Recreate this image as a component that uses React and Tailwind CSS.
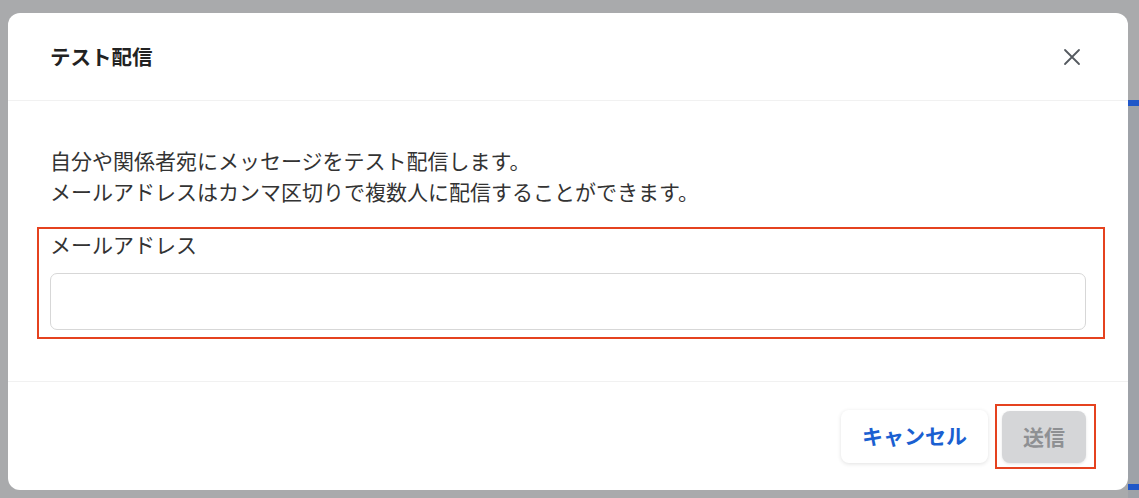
const FONT = { fontFamily: '"Noto Sans CJK JP", "Noto Sans", sans-serif' };

function CloseIcon() {
  return (
    <svg width="18" height="18" viewBox="0 0 18 18" fill="none" aria-hidden="true">
      <path d="M2 2L16 16M16 2L2 16" stroke="#555a60" strokeWidth="1.8" strokeLinecap="round" />
    </svg>
  );
}

export default function App() {
  return (
    <div className="flex h-[498px] w-[1139px] bg-[#a9aaac] text-[#333]" style={FONT}>
      <div className="w-[8px] shrink-0" />

      <div className="mt-[13px] flex h-[477px] w-[1120px] shrink-0 flex-col rounded-[12px] bg-white">
        <div className="flex h-[88px] items-center justify-between border-b border-[#f1f1f1] pl-[42px] pr-[47px]">
          <h2 className="text-[20.5px] font-bold text-[#222]">テスト配信</h2>
          <button type="button" aria-label="閉じる" className="flex items-center">
            <CloseIcon />
          </button>
        </div>

        <div className="flex-1 px-[42px] pt-[44px]">
          <p className="text-[21px] leading-[31px]">
            自分や関係者宛にメッセージをテスト配信します。
            <br />
            メールアドレスはカンマ区切りで複数人に配信することができます。
          </p>

          <div className="-ml-[13px] mt-[20px] w-[1068px] border-2 border-[#e5421f] pb-[7px] pl-[11px] pr-[17px]">
            <label htmlFor="email" className="block text-[21px] leading-[31px]">
              メールアドレス
            </label>
            <input
              id="email"
              type="text"
              className="mt-[13px] block h-[57px] w-full rounded-[7px] border border-[#d7d7d7] px-3 text-[18px] outline-none"
            />
          </div>
        </div>

        <div className="flex h-[109px] items-center justify-end gap-[7px] border-t border-[#f1f1f1] pr-[32px]">
          <button
            type="button"
            className="h-[53px] w-[147px] rounded-[8px] bg-white text-[21px] font-bold text-[#1a5fd1] shadow-[0_1px_4px_rgba(0,0,0,0.12)]"
          >
            キャンセル
          </button>
          <div className="border-2 border-[#e5421f] pb-[4px] pl-[5px] pr-[8px] pt-[5px]">
            <button
              type="button"
              disabled
              className="h-[52px] w-[84px] rounded-[8px] bg-[#d5d6d8] text-[21px] font-bold text-[#8e9093] shadow-[0_1px_3px_rgba(0,0,0,0.1)]"
            >
              送信
            </button>
          </div>
        </div>
      </div>

      <div className="flex w-[11px] shrink-0 flex-col">
        <div className="h-[100px] bg-[#a9aaac]" />
        <div className="h-[6px] bg-[#2157c8]" />
        <div className="h-[378px] bg-[#9ea2a8]" />
        <div className="h-[6px] bg-[#2157c8]" />
        <div className="flex-1 bg-[#9ea2a8]" />
      </div>
    </div>
  );
}
